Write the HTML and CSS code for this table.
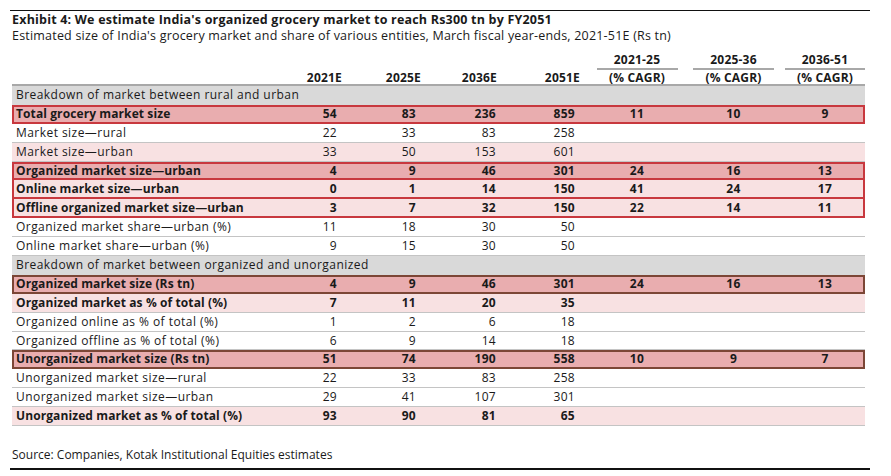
FILE: index.html
```html
<!DOCTYPE html>
<html>
<head>
<meta charset="utf-8">
<link rel="stylesheet" href="styles.css">
</head>
<body>
<div class="page">
  <div class="title">Exhibit 4: We estimate India's organized grocery market to reach Rs300 tn by FY2051</div>
  <div class="subtitle">Estimated size of India's grocery market and share of various entities, March fiscal year-ends, 2021-51E (Rs tn)</div>
  <div class="table">
    <div class="head">
      <div class="h1 sp"></div>
      <div class="h1 yr"></div><div class="h1 yr"></div><div class="h1 yr"></div><div class="h1 yr"></div>
      <div class="h1 cg"><span>2021-25</span></div>
      <div class="h1 cg"><span>2025-36</span></div>
      <div class="h1 cg"><span>2036-51</span></div>
      <div class="h2 sp"></div>
      <div class="h2 yr y1">2021E</div>
      <div class="h2 yr y2">2025E</div>
      <div class="h2 yr y3">2036E</div>
      <div class="h2 yr y4">2051E</div>
      <div class="h2 cg">(% CAGR)</div>
      <div class="h2 cg">(% CAGR)</div>
      <div class="h2 cg">(% CAGR)</div>
    </div>

    <div class="row section"><div class="lbl">Breakdown of market between rural and urban</div></div>
    <div class="row box red strong bold"><div class="lbl">Total grocery market size</div><div class="n y1">54</div><div class="n y2">83</div><div class="n y3">236</div><div class="n y4">859</div><div class="c">11</div><div class="c">10</div><div class="c">9</div></div>
    <div class="row"><div class="lbl">Market size—rural</div><div class="n y1">22</div><div class="n y2">33</div><div class="n y3">83</div><div class="n y4">258</div></div>
    <div class="row light"><div class="lbl">Market size—urban</div><div class="n y1">33</div><div class="n y2">50</div><div class="n y3">153</div><div class="n y4">601</div></div>
    <div class="row box red strong bold"><div class="lbl">Organized market size—urban</div><div class="n y1">4</div><div class="n y2">9</div><div class="n y3">46</div><div class="n y4">301</div><div class="c">24</div><div class="c">16</div><div class="c">13</div></div>
    <div class="row box red cont light bold"><div class="lbl">Online market size—urban</div><div class="n y1">0</div><div class="n y2">1</div><div class="n y3">14</div><div class="n y4">150</div><div class="c">41</div><div class="c">24</div><div class="c">17</div></div>
    <div class="row box red cont light bold"><div class="lbl">Offline organized market size—urban</div><div class="n y1">3</div><div class="n y2">7</div><div class="n y3">32</div><div class="n y4">150</div><div class="c">22</div><div class="c">14</div><div class="c">11</div></div>
    <div class="row"><div class="lbl">Organized market share—urban (%)</div><div class="n y1">11</div><div class="n y2">18</div><div class="n y3">30</div><div class="n y4">50</div></div>
    <div class="row"><div class="lbl">Online market share—urban (%)</div><div class="n y1">9</div><div class="n y2">15</div><div class="n y3">30</div><div class="n y4">50</div></div>

    <div class="row section"><div class="lbl">Breakdown of market between organized and unorganized</div></div>
    <div class="row box brown strong bold"><div class="lbl">Organized market size (Rs tn)</div><div class="n y1">4</div><div class="n y2">9</div><div class="n y3">46</div><div class="n y4">301</div><div class="c">24</div><div class="c">16</div><div class="c">13</div></div>
    <div class="row light bold"><div class="lbl">Organized market as % of total (%)</div><div class="n y1">7</div><div class="n y2">11</div><div class="n y3">20</div><div class="n y4">35</div></div>
    <div class="row"><div class="lbl">Organized online as % of total (%)</div><div class="n y1">1</div><div class="n y2">2</div><div class="n y3">6</div><div class="n y4">18</div></div>
    <div class="row"><div class="lbl">Organized offline as % of total (%)</div><div class="n y1">6</div><div class="n y2">9</div><div class="n y3">14</div><div class="n y4">18</div></div>
    <div class="row box brown strong bold"><div class="lbl">Unorganized market size (Rs tn)</div><div class="n y1">51</div><div class="n y2">74</div><div class="n y3">190</div><div class="n y4">558</div><div class="c">10</div><div class="c">9</div><div class="c">7</div></div>
    <div class="row"><div class="lbl">Unorganized market size—rural</div><div class="n y1">22</div><div class="n y2">33</div><div class="n y3">83</div><div class="n y4">258</div></div>
    <div class="row"><div class="lbl">Unorganized market size—urban</div><div class="n y1">29</div><div class="n y2">41</div><div class="n y3">107</div><div class="n y4">301</div></div>
    <div class="row light bold"><div class="lbl">Unorganized market as % of total (%)</div><div class="n y1">93</div><div class="n y2">90</div><div class="n y3">81</div><div class="n y4">65</div></div>
  </div>
  <div class="source">Source: Companies, Kotak Institutional Equities estimates</div>
</div>
</body>
</html>
```

FILE: styles.css
```css
* { box-sizing: border-box; }
html, body { margin: 0; padding: 0; background: #fff; }
body {
  font-family: "Open Sans", "Noto Sans", sans-serif;
  color: #1a1a1a;
}
.page {
  margin: 10px 0 0 10px;
  width: 860px;
  border-top: 1px solid #111;
  border-bottom: 2px solid #111;
}
.title {
  font-size: 12.5px;
  font-weight: 700;
  line-height: 16px;
  padding-left: 2px;
  margin-top: 1px;
  letter-spacing: 0.2px;
}
.subtitle {
  font-size: 12.5px;
  line-height: 15px;
  padding-left: 2px;
  letter-spacing: 0.2px;
}
.table {
  margin: 8px 0 0 2px;
  width: 853px;
  font-size: 12px;
}
.head, .row {
  display: grid;
  grid-template-columns: 250px 80px 79px 76px 95px 90px 103px 80px;
}
.head .h1 { height: 19px; }
.head .h2 {
  height: 16px;
  line-height: 15px;
  border-bottom: 2px solid #a8a8a8;
}
.head .yr, .head .cg { font-weight: 700; font-size: 12px; letter-spacing: 0.2px; }
.head .h1.cg {
  display: flex;
  justify-content: center;
  align-items: flex-end;
}
.head .h1.cg span {
  display: block;
  width: 81px;
  text-align: center;
  line-height: 16px;
  border-bottom: 2px solid #a8a8a8;
}
.head .h2.yr { text-align: right; }
.head .h2.y4 { padding-right: 12px; }
.head .h2.cg { text-align: center; }

.row {
  height: 18.9px;
  line-height: 18px;
  border-bottom: 1px solid #c4c4c4;
  letter-spacing: 0.45px;
}
.row .lbl { padding-left: 4px; white-space: nowrap; }
.row .n { text-align: right; letter-spacing: 0.3px; }
.row .y1, .row .y2 { padding-right: 5px; }
.row .y3 { padding-right: 1px; }
.row .y4 { padding-right: 17px; }
.row .c { text-align: center; letter-spacing: 0.3px; }
.row.section { background: #d9d9d9; border-bottom: 0; }
.row.bold { font-weight: 700; letter-spacing: 0.1px; }
.row.light { background: #f8e1e2; }
.row.strong { background: #e9adaf; }
.row.box { border-bottom: 0; }
.row.box.red { box-shadow: inset 0 0 0 2px #c8383e; }
.row.box.brown { box-shadow: inset 0 0 0 2px #7c4636; }
.row.box.red.cont { box-shadow: inset 2px 0 0 #c8383e, inset -2px 0 0 #c8383e, inset 0 -2px 0 #c8383e; }

.source {
  margin-top: 21px;
  padding-left: 2px;
  font-size: 12px;
  line-height: 16px;
  height: 21px;
}
```
